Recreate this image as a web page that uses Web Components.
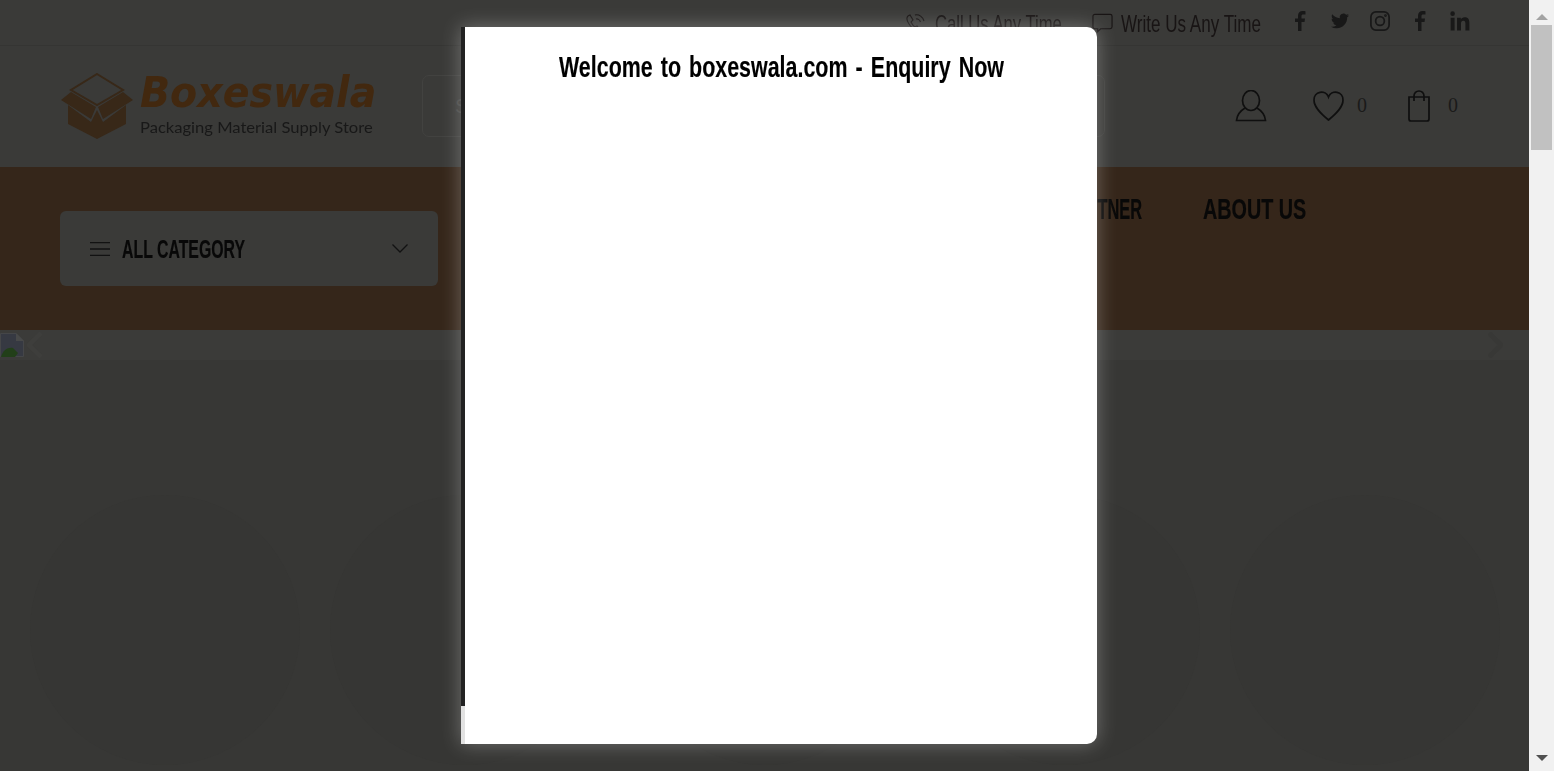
<!DOCTYPE html>
<html lang="en"><head><meta charset="utf-8"><title>Boxeswala</title>
<style>
html,body{margin:0;height:100%;overflow:hidden;background:#373735}
body{display:flex;font-family:"Liberation Sans",Arial,sans-serif}
</style></head><body>
<bw-page>
  <bw-topbar></bw-topbar>
  <bw-header></bw-header>
  <bw-nav></bw-nav>
  <bw-slider></bw-slider>
  <bw-circles></bw-circles>
  <bw-modal>Welcome to boxeswala.com - Enquiry Now</bw-modal>
</bw-page>
<bw-scrollbar></bw-scrollbar>
<script>
const def=(n,h)=>customElements.define(n,class extends HTMLElement{constructor(){super();this.attachShadow({mode:'open'}).innerHTML=h}});
/* bw-fit: condensed text squeezed to the width given in its w attribute */
customElements.define('bw-fit',class extends HTMLElement{
  constructor(){super();this.attachShadow({mode:'open'}).innerHTML=`<style>:host{display:inline-block;white-space:nowrap;text-align:left}span{display:inline-block;transform-origin:0 50%}</style><span><slot></slot></span>`}
  connectedCallback(){const w=+this.getAttribute('w');this.style.width=w+'px';const s=this.shadowRoot.querySelector('span');const n=s.offsetWidth;if(n)s.style.transform=`scaleX(${w/n})`}
});
const F="M14 22v-9h3l.5-3.5H14V7.3c0-1 .3-1.7 1.8-1.7H18V2.4C17.6 2.3 16.4 2.2 15.1 2.2 12.4 2.2 10.5 3.9 10.5 6.9v2.6H7.500V13h3v9z";
def('bw-page',`<style>:host{display:block;position:relative;flex:1 1 0;min-width:0;height:771px;overflow:hidden}</style><slot></slot>`);
def('bw-topbar',`<style>
:host{display:flex;align-items:center;justify-content:flex-end;height:46px;box-sizing:border-box;padding-right:59px;background:#3a3a38;border-bottom:1px solid #353533;color:#181414;font-size:24px}
.i{display:flex;align-items:center}
.call{margin-right:30px;gap:7px}.write{margin-right:29px;gap:8px}
bw-fit{padding-top:3px}
.s{display:flex;gap:20px;margin-top:-3px}
svg{display:block}
.s svg{width:20px;height:20px;fill:#181818}
</style>
<div class="i call"><svg width="23" height="22" viewBox="0 0 23 22" fill="none" stroke="#181414" stroke-width="1.100"><path d="M3 4c-2 2-1 5 1 8s5 6 8 7c1 .4 3 0 3-1l-3-4-2 1c-2-1-3-3-4-5l2-2-3-5z"/><path d="M10 3c4-1 8 2 9 6M11 7c2-.4 4 1 4.500 3"/></svg><bw-fit w="127">Call Us Any Time</bw-fit></div>
<div class="i write"><svg width="21" height="22" viewBox="0 0 22 22" fill="none" stroke="#181414" stroke-width="1.200"><path d="M3 2h16a2 2 0 0 1 2 2v11a2 2 0 0 1-2 2H9l-3 3v-3H3a2 2 0 0 1-2-2V4a2 2 0 0 1 2-2z"/></svg><bw-fit w="140">Write Us Any Time</bw-fit></div>
<div class="s">
<svg viewBox="2.500 2.200 20 19.800"><path d="${F}"/></svg>
<svg viewBox="-1.300 -1.300 26.600 26.600"><path d="M23.95 4.57a10 10 0 0 1-2.820.77 4.960 4.960 0 0 0 2.160-2.720c-.950.550-2 .960-3.120 1.190a4.920 4.920 0 0 0-8.380 4.480C7.690 8.090 4.070 6.130 1.640 3.160a4.820 4.820 0 0 0-.660 2.470c0 1.710.870 3.210 2.190 4.100a4.900 4.900 0 0 1-2.230-.610v.060a4.920 4.920 0 0 0 3.950 4.830 5 5 0 0 1-2.210.080 4.940 4.940 0 0 0 4.600 3.420A9.870 9.870 0 0 1 0 19.540a14 14 0 0 0 7.560 2.210c9.050 0 14-7.500 14-13.980 0-.210 0-.420-.020-.630a9.940 9.940 0 0 0 2.460-2.550z"/></svg>
<svg viewBox="1 1 22 22" style="fill:none;stroke:#181818;stroke-width:1.900"><rect x="2" y="2" width="20" height="20" rx="5.500"/><circle cx="12" cy="12" r="4.800"/><circle cx="18" cy="6" r=".6"/></svg>
<svg viewBox="2.500 2.200 20 19.800"><path d="${F}"/></svg>
<svg viewBox="3 3 18 18"><path d="M20.450 20.450h-3.560v-5.570c0-1.330-.020-3.040-1.850-3.040-1.850 0-2.140 1.450-2.140 2.940v5.670H9.350V9h3.410v1.560h.050c.480-.900 1.640-1.850 3.370-1.850 3.600 0 4.270 2.370 4.270 5.460v6.280zM5.340 7.430a2.060 2.060 0 1 1 0-4.120 2.060 2.060 0 0 1 0 4.120zM7.120 20.450H3.560V9h3.560v11.450z"/></svg>
</div>`);
def('bw-header',`<style>
:host{display:flex;align-items:center;height:121px;box-sizing:border-box;padding:0 0 2px 61px;background:#3a3a38}
.logo{display:flex;gap:7px;width:361px;flex:none;align-items:center;filter:blur(.35px)}
.lt{display:flex;flex-direction:column;margin-top:-5px;font-family:"Lato","Open Sans",sans-serif}
.b{font:oblique 700 43px/44px "DejaVu Sans",sans-serif;color:#42280f}
.p{font-size:15px;line-height:18px;color:#181818;margin-top:4px}
.search{width:683px;height:62px;box-sizing:border-box;flex:none;border:1px solid #424240;border-radius:7px;padding:0 32px;font:20px/60px "Liberation Sans",sans-serif;color:#484846}
.ic{display:flex;align-items:center;margin-left:130px;font:20px "Liberation Serif",serif;color:#1a1a1a}
svg{display:block;fill:none;stroke:#0f0f0f;stroke-width:1.700}
.n{margin-left:12px}
</style>
<div class="logo"><svg width="72" height="66" viewBox="61 73 72 66" style="stroke:none"><path fill="none" stroke="#382818" stroke-width="2" d="M97 74l26 16-26 15-26-15z"/><path fill="#382818" d="M71 92l25 15-5 12-30-19zM123 92l-25 15 5 12 30-19zM68 105l23 17 6-12 6 12 23-17v19l-29 15-29-15z"/></svg>
<div class="lt"><bw-fit class="b" w="236">Boxeswala</bw-fit><bw-fit class="p" w="233">Packaging Material Supply Store</bw-fit></div></div>
<div class="search">S</div>
<div class="ic">
<svg width="32" height="32" viewBox="0 0 32 32"><ellipse cx="16" cy="10.500" rx="8.500" ry="10"/><path d="M10 18C5 21 2 25 1.500 30.500H30.500C30 25 27 21 22 18"/></svg>
<svg style="margin-left:45px" width="33" height="32" viewBox="0 0 33 32"><path d="M16.500 30C8 23 2 17 2 10a7.500 7.500 0 0 1 14.500-3A7.500 7.500 0 0 1 31 10c0 7-6 13-14.500 20z"/></svg><span class="n">0</span>
<svg style="margin-left:41px" width="22" height="32" viewBox="0 0 22 32"><path d="M1 7h20v22a2 2 0 0 1-2 2H3a2 2 0 0 1-2-2zM6 11V6a5 5 0 0 1 10 0v5"/></svg><span class="n" style="margin-left:18px">0</span>
</div>`);
def('bw-nav',`<style>
:host{display:flex;align-items:flex-start;height:163px;box-sizing:border-box;padding:25px 223px 0 60px;background:#35261a;color:#080808;font-weight:700;font-size:29px;-webkit-text-stroke:.15px #080808}
.card{display:flex;align-items:center;width:378px;height:75px;margin-top:19px;box-sizing:border-box;padding:0 30px;background:#3a3a38;border-radius:6px;font-size:25px}
.card bw-fit{margin-left:12px;padding-top:2px}
.card svg:last-child{margin-left:auto}
.m{margin-left:auto;display:flex;gap:61px;line-height:34px}
svg{display:block;fill:none;stroke:#121212}
</style>
<div class="card"><svg width="20" height="14" viewBox="0 0 20 14" stroke-width="1.300"><path d="M0 .700h20M0 7h20M0 13.300h20"/></svg><bw-fit w="123">ALL CATEGORY</bw-fit><svg width="16" height="9" viewBox="0 0 16 9" stroke-width="1.300"><path d="M.500.500L8 8l7.500-7.500"/></svg></div>
<div class="m"><bw-fit w="78">PARTNER</bw-fit><bw-fit w="103">ABOUT US</bw-fit></div>`);
def('bw-slider',`<style>
:host{display:flex;justify-content:space-between;align-items:center;height:30px;background:#3b3b39}
.l{display:flex;align-items:center;gap:3px}
svg{display:block}
.a{fill:none;stroke-width:4.500}
.ic{align-self:flex-start;margin-top:1px}
.r{margin-right:26px}
</style>
<div class="l"><svg class="ic" width="24" height="24" viewBox="0 0 24 24"><path fill="#363942" stroke="#454648" d="M.5.5h15.500l7.500 7.500v15.500H.5z"/><path fill="#484949" d="M16 0l8 8h-8z"/><path fill="#223f19" d="M1 24c2-7 7-10 12-9l5 5-3 4z"/></svg><svg class="a" stroke="#3e3e3c" width="15" height="26" viewBox="0 0 15 26"><path d="M14 1L2 13l12 12"/></svg></div>
<svg class="a r" stroke="#383836" width="15" height="26" viewBox="0 0 15 26"><path d="M1 1l12 12L1 25"/></svg>`);
def('bw-circles',`<style>
:host{display:grid;grid-template-columns:repeat(5,300px);padding:135px 0 0 15px;height:411px;box-sizing:border-box;background:#373735}
i{display:block;width:270px;height:270px;justify-self:center;border-radius:50%;background:#363634}
</style><i></i><i></i><i></i><i></i><i></i>`);
def('bw-modal',`<style>
:host{position:absolute;left:461px;top:27px;width:636px;height:717px;display:flex;background:#fff;border-radius:0 10px 10px 0;box-shadow:0 0 20px rgba(255,255,255,.3)}
.strip{width:4px;flex:none;background:linear-gradient(#222 0,#222 679px,#e2e2e2 679px)}
h2{flex:1;margin:0;padding-top:20px;text-align:center;font-size:30px;line-height:40px;font-weight:700;color:#000;word-spacing:3px;-webkit-text-stroke:.15px #000}
</style><div class="strip"></div><h2><bw-fit w="445"><slot></slot></bw-fit></h2>`);
def('bw-scrollbar',`<style>
:host{display:flex;flex-direction:column;align-items:center;width:25px;flex:none;height:771px;background:#f1f1f1;box-sizing:border-box;padding-top:14px}
.u{width:0;border:6px solid transparent;border-top:0;border-bottom:6px solid #a3a3a3}
.t{width:21px;height:125px;background:#c1c1c1;margin-top:5px}
.d{width:0;border:6px solid transparent;border-bottom:0;border-top:6px solid #505050;margin-top:auto;margin-bottom:10px}
</style><div class="u"></div><div class="t"></div><div class="d"></div>`);
</script></body></html>
